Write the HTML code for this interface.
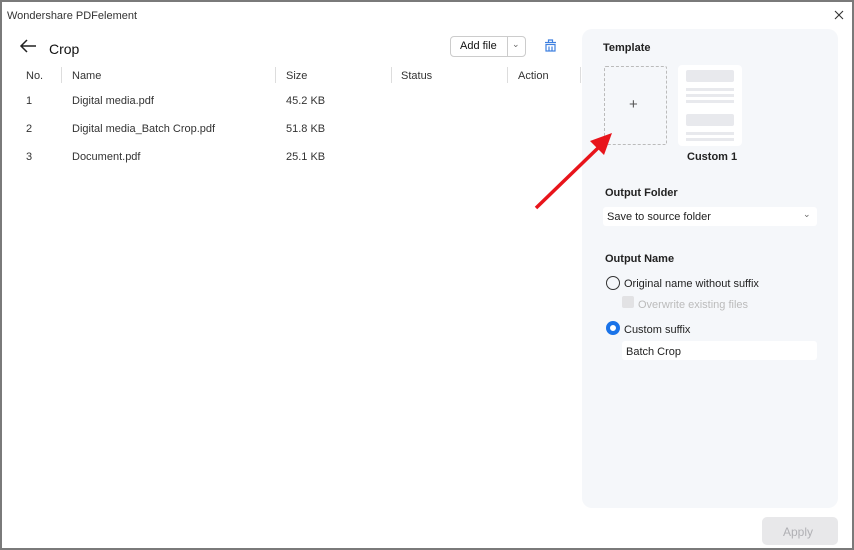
<!DOCTYPE html>
<html><head><meta charset="utf-8"><style>
*{margin:0;padding:0;box-sizing:border-box}
body{width:854px;height:550px;background:#7a7a7a;font-family:"Liberation Sans",sans-serif;color:#222;overflow:hidden;position:relative}
.win{position:absolute;left:2px;top:2px;width:850px;height:546px;background:#fff}
.a{position:absolute;white-space:nowrap}
.t{font-size:11px;color:#333}
.sep{position:absolute;top:67px;width:1px;height:16px;background:#ddd}
.panel{position:absolute;left:582px;top:29px;width:256px;height:479px;background:#f5f7fa;border-radius:10px}
.h{font-size:11px;font-weight:bold;color:#222}
</style></head><body><div class="win"></div>
<div class="a" style="left:7px;top:10px;font-size:11px;color:#333">Wondershare PDFelement</div>
<svg class="a" style="left:834px;top:10px" width="10" height="10"><path d="M1 1l8 8M9 1l-8 8" stroke="#333" stroke-width="1.1"/></svg>
<svg class="a" style="left:19px;top:39px" width="18" height="14"><path d="M17 7H2M8 1L2 7l6 6" stroke="#222" stroke-width="1.5" fill="none"/></svg>
<div class="a" style="left:49px;top:41px;font-size:14px;color:#111">Crop</div>
<div class="a" style="left:450px;top:36px;width:76px;height:21px;border:1px solid #ccc;border-radius:4px;background:#fff"></div>
<div class="a" style="left:507px;top:37px;width:1px;height:19px;background:#ccc"></div>
<div class="a" style="left:460px;top:40px;font-size:11px;color:#111">Add file</div>
<div class="a" style="left:512px;top:39px;font-size:9px;color:#666">⌄</div>
<svg class="a" style="left:543px;top:38px" width="15" height="15"><g stroke="#3d7fe0" stroke-width="1.2" fill="none"><path d="M5.5 4V2h4v2"/><path d="M2 4.5h11"/><rect x="3" y="6.5" width="9" height="6.5"/><path d="M6 8.5v4.5M9 8.5v4.5"/></g></svg>
<div class="a t" style="left:26px;top:70px">No.</div>
<div class="sep" style="left:61px"></div>
<div class="a t" style="left:72px;top:70px">Name</div>
<div class="sep" style="left:275px"></div>
<div class="a t" style="left:286px;top:70px">Size</div>
<div class="sep" style="left:391px"></div>
<div class="a t" style="left:401px;top:70px">Status</div>
<div class="sep" style="left:507px"></div>
<div class="a t" style="left:518px;top:70px">Action</div>
<div class="sep" style="left:580px"></div>
<div class="a t" style="left:26px;top:95px">1</div><div class="a t" style="left:72px;top:95px">Digital media.pdf</div><div class="a t" style="left:286px;top:95px">45.2 KB</div>
<div class="a t" style="left:26px;top:123px">2</div><div class="a t" style="left:72px;top:123px">Digital media_Batch Crop.pdf</div><div class="a t" style="left:286px;top:123px">51.8 KB</div>
<div class="a t" style="left:26px;top:151px">3</div><div class="a t" style="left:72px;top:151px">Document.pdf</div><div class="a t" style="left:286px;top:151px">25.1 KB</div>
<div class="panel"></div>
<div class="a h" style="left:603px;top:42px">Template</div>
<div class="a" style="left:604px;top:66px;width:63px;height:79px;border:1px dashed #bbb;border-radius:2px"></div>
<div class="a" style="left:629px;top:96px;font-size:15px;color:#555">+</div>
<div class="a" style="left:678px;top:65px;width:64px;height:81px;background:#fff;border-radius:4px"></div>
<div class="a" style="left:686px;top:70px;width:48px;height:12px;background:#e8e9ed;border-radius:2px"></div>
<div class="a" style="left:686px;top:88px;width:48px;height:3px;background:#e8e9ed"></div>
<div class="a" style="left:686px;top:94px;width:48px;height:3px;background:#e8e9ed"></div>
<div class="a" style="left:686px;top:100px;width:48px;height:3px;background:#e8e9ed"></div>
<div class="a" style="left:686px;top:114px;width:48px;height:12px;background:#e8e9ed;border-radius:2px"></div>
<div class="a" style="left:686px;top:132px;width:48px;height:3px;background:#e8e9ed"></div>
<div class="a" style="left:686px;top:138px;width:48px;height:3px;background:#e8e9ed"></div>
<div class="a h" style="left:687px;top:151px">Custom 1</div>
<div class="a h" style="left:605px;top:187px">Output Folder</div>
<div class="a" style="left:603px;top:207px;width:214px;height:19px;background:#fff;border-radius:3px"></div>
<div class="a t" style="left:607px;top:211px;color:#222">Save to source folder</div>
<div class="a" style="left:803px;top:209px;font-size:9px;color:#666">⌄</div>
<div class="a h" style="left:605px;top:253px">Output Name</div>
<div class="a" style="left:606px;top:276px;width:14px;height:14px;border:1.3px solid #333;border-radius:50%"></div>
<div class="a t" style="left:624px;top:278px;color:#222">Original name without suffix</div>
<div class="a" style="left:622px;top:296px;width:12px;height:12px;background:#e2e2e4;border-radius:2px"></div>
<div class="a t" style="left:638px;top:299px;color:#bbb">Overwrite existing files</div>
<div class="a" style="left:606px;top:321px;width:14px;height:14px;border:4px solid #1a73e8;border-radius:50%;background:#fff"></div>
<div class="a t" style="left:624px;top:324px;color:#222">Custom suffix</div>
<div class="a" style="left:622px;top:341px;width:195px;height:19px;background:#fff;border-radius:3px"></div>
<div class="a t" style="left:626px;top:346px;color:#222">Batch Crop</div>
<div class="a" style="left:762px;top:517px;width:76px;height:28px;background:#e8e8ea;border-radius:5px"></div>
<div class="a" style="left:783px;top:525px;font-size:12px;color:#b0b0b4">Apply</div>
<svg class="a" style="left:0;top:0" width="854" height="550"><line x1="536" y1="208" x2="598" y2="148" stroke="#e8141b" stroke-width="3.5"/><polygon points="612,133 590,141 604,155" fill="#e8141b"/></svg>
</body></html>
